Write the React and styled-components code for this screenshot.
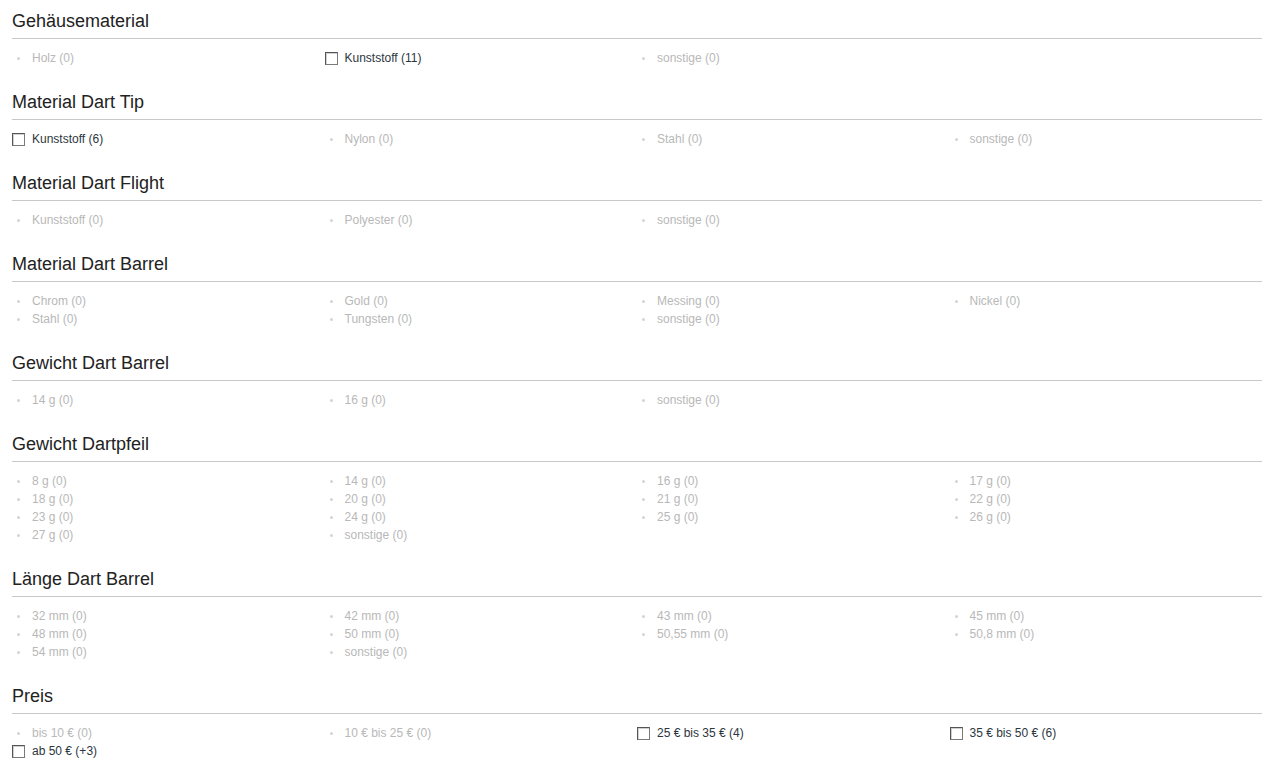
import React from 'react';
import styled, { createGlobalStyle } from 'styled-components';

const GlobalStyle = createGlobalStyle`
  html, body {
    margin: 0;
    padding: 0;
    background: #fff;
    font-family: "Liberation Sans", Arial, sans-serif;
  }
`

const Page = styled.div`
  padding: 1px 21px 0 12px;
`

const Section = styled.section`
  padding-bottom: 15px;
`

const Title = styled.h3`
  margin: 10px 0 0 0;
  padding: 0 0 7px 0;
  font-size: 18px;
  line-height: 20px;
  font-weight: 400;
  color: #222;
  border-bottom: 1px solid #c8c8c8;
`

const ItemGrid = styled.ul`
  list-style: none;
  margin: 0;
  padding: 10px 0 0 0;
  display: grid;
  grid-template-columns: repeat(4, 1fr);
`

const Item = styled.li`
  display: flex;
  align-items: center;
  height: 18px;
  font-size: 12px;
  color: ${p => (p.$active ? '#2c3640' : '#b8b8b8')};
  cursor: ${p => (p.$active ? 'pointer' : 'default')};
`

const Marker = styled.span`
  width: 20px;
  flex: 0 0 20px;
  display: flex;
  align-items: center;
`

const Dot = styled.span`
  width: 3px;
  height: 3px;
  margin-left: 5px;
  border-radius: 50%;
  background: #d4d4d4;
`

const Box = styled.span`
  box-sizing: border-box;
  width: 13px;
  height: 13px;
  border: 1px solid #7a7a7a;
  border-top-color: #555;
  border-left-color: #555;
  background: #fff;
  box-shadow: inset 1px 1px 0 #d0d0d0;
`

const sections = [
  { title: 'Gehäusematerial', items: [['Holz (0)'], ['Kunststoff (11)', 1], ['sonstige (0)']] },
  { title: 'Material Dart Tip', items: [['Kunststoff (6)', 1], ['Nylon (0)'], ['Stahl (0)'], ['sonstige (0)']] },
  { title: 'Material Dart Flight', items: [['Kunststoff (0)'], ['Polyester (0)'], ['sonstige (0)']] },
  {
    title: 'Material Dart Barrel',
    items: [['Chrom (0)'], ['Gold (0)'], ['Messing (0)'], ['Nickel (0)'], ['Stahl (0)'], ['Tungsten (0)'], ['sonstige (0)']],
  },
  { title: 'Gewicht Dart Barrel', items: [['14 g (0)'], ['16 g (0)'], ['sonstige (0)']] },
  {
    title: 'Gewicht Dartpfeil',
    items: [
      ['8 g (0)'], ['14 g (0)'], ['16 g (0)'], ['17 g (0)'],
      ['18 g (0)'], ['20 g (0)'], ['21 g (0)'], ['22 g (0)'],
      ['23 g (0)'], ['24 g (0)'], ['25 g (0)'], ['26 g (0)'],
      ['27 g (0)'], ['sonstige (0)'],
    ],
  },
  {
    title: 'Länge Dart Barrel',
    items: [
      ['32 mm (0)'], ['42 mm (0)'], ['43 mm (0)'], ['45 mm (0)'],
      ['48 mm (0)'], ['50 mm (0)'], ['50,55 mm (0)'], ['50,8 mm (0)'],
      ['54 mm (0)'], ['sonstige (0)'],
    ],
  },
  {
    title: 'Preis',
    items: [
      ['bis 10 € (0)'], ['10 € bis 25 € (0)'], ['25 € bis 35 € (4)', 1], ['35 € bis 50 € (6)', 1],
      ['ab 50 € (+3)', 1],
    ],
  },
]

export default function App() {
  return (
    <Page>
      <GlobalStyle />
      {sections.map(s => (
        <Section key={s.title}>
          <Title>{s.title}</Title>
          <ItemGrid>
            {s.items.map(([label, active]) => (
              <Item key={label} $active={!!active}>
                <Marker>{active ? <Box /> : <Dot />}</Marker>
                {label}
              </Item>
            ))}
          </ItemGrid>
        </Section>
      ))}
    </Page>
  )
}
